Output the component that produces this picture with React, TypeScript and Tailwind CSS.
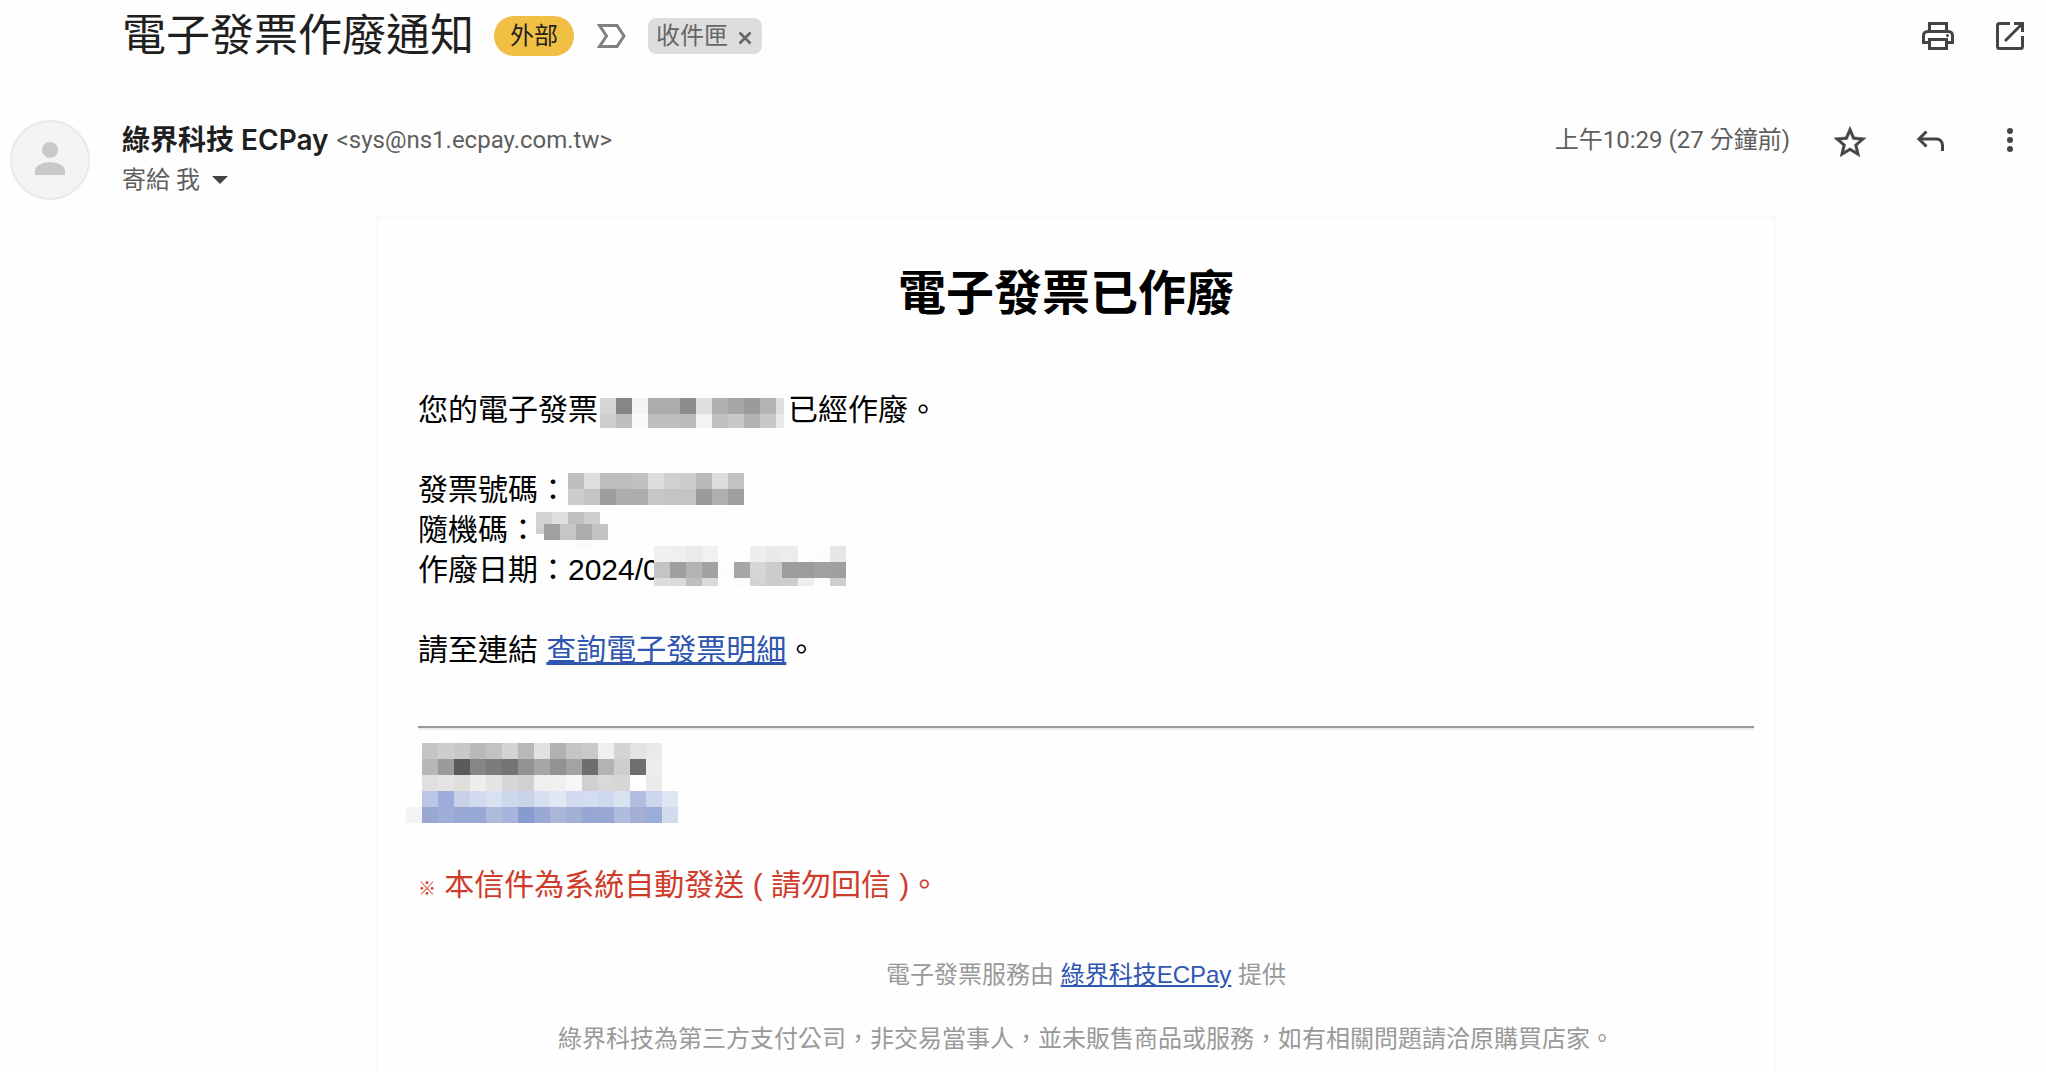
import React, { useState } from 'react';

interface MosaicRow {
  x: number;
  y: number;
  w?: number;
  h?: number;
  cells: string[];
}

interface MosaicProps {
  width: number;
  height: number;
  rows: MosaicRow[];
  className?: string;
}

const CELL = 16;

// Pixelated block that hides private data
const Mosaic = ({ width, height, rows, className = '' }: MosaicProps) => (
  <svg
    width={width}
    height={height}
    viewBox={`0 0 ${width} ${height}`}
    shapeRendering="crispEdges"
    aria-hidden="true"
    className={`shrink-0 overflow-visible ${className}`}
  >
    {rows.map((row) =>
      row.cells.map((fill, i) => (
        <rect
          key={`${row.x}-${row.y}-${i}`}
          x={row.x + i * CELL}
          y={row.y}
          width={row.w ?? CELL}
          height={row.h ?? CELL}
          fill={fill}
        />
      ))
    )}
  </svg>
);

const nameRows: MosaicRow[] = [
  { x: 0, y: 6, cells: ['#d6d6d6', '#868686', '#f4f4f4', '#acacac', '#acacac', '#8d8d8d', '#dfdfdf', '#b0b0b0', '#a6a6a6', '#9a9a9a', '#b3b3b3'] },
  { x: 176, y: 6, w: 8, cells: ['#dedede'] },
  { x: 0, y: 22, h: 14, cells: ['#cecece', '#bebebe', '#fafafa', '#bebebe', '#bebebe', '#bcbcbc', '#f3f3f3', '#c1c1c1', '#c7c7c7', '#b2b2b2', '#c8c8c8'] },
  { x: 176, y: 22, w: 8, h: 14, cells: ['#e8e8e8'] },
];

const numberRows: MosaicRow[] = [
  { x: 0, y: 0, cells: ['#bebebe', '#dedede', '#bdbdbd', '#bdbdbd', '#c1c1c1', '#dddddd', '#d0d0d0', '#cccccc', '#b9b9b9', '#dcdcdc', '#c2c2c2'] },
  { x: 0, y: 16, cells: ['#cdcdcd', '#c5c5c5', '#9d9d9d', '#adadad', '#adadad', '#c7c7c7', '#c4c4c4', '#c4c4c4', '#9b9b9b', '#afafaf', '#9e9e9e'] },
];

const randomRows: MosaicRow[] = [
  { x: 0, y: 0, cells: ['#d2d2d2', '#dedede', '#bfbfbf', '#cecece'] },
  { x: 0, y: 16, h: 6, cells: ['#cfcfcf'] },
  { x: 8, y: 12, cells: ['#a0a0a0', '#c6c6c6', '#acacac', '#c3c3c3'] },
  { x: 40, y: 28, h: 8, cells: ['#fafafa', '#fcfcfc'] },
];

const dateRows: MosaicRow[] = [
  { x: 0, y: 0, cells: ['#f0f0f0', '#efefef', '#eaeaea', '#f1f1f1', '#fefefe', '#fefefe', '#eeeeee', '#e9e9e9', '#ececec', '#fefefe', '#fcfcfc', '#e6e6e6'] },
  { x: 0, y: 16, cells: ['#c4c4c4', '#9f9f9f', '#b3b3b3', '#a2a2a2', '#fcfcfc', '#a6a6a6', '#d6d6d6', '#cccccc', '#9d9d9d', '#9c9c9c', '#a1a1a1', '#9f9f9f'] },
  { x: 0, y: 32, h: 8, cells: ['#dcdcdc', '#dadada', '#bebebe', '#dadada', '#fefefe', '#fbfbfb', '#d3d3d3', '#cccccc', '#cdcdcd', '#eeeeee', '#fcfcfc', '#cecece'] },
];

const storeRows: MosaicRow[] = [
  { x: 16, y: 0, cells: ['#c5c5c5', '#cdcdcd', '#c8c8c8', '#b9b9b9', '#c2c2c2', '#d4d4d4', '#b8b8b8', '#e2e2e2', '#b2b2b2', '#c5c5c5', '#c9c9c9', '#efefef', '#d4d4d4', '#e3e3e3', '#e9e9e9'] },
  { x: 16, y: 16, cells: ['#b7b7b7', '#9b9b9b', '#5b5b5b', '#868686', '#7c7c7c', '#747474', '#939393', '#a6a6a6', '#929292', '#a3a3a3', '#6e6e6e', '#b3b3b3', '#cecece', '#6f6f6f', '#ededed'] },
  { x: 16, y: 32, cells: ['#e0e0e0', '#e4e4e4', '#dededb', '#eeeeee', '#e3e5e4', '#d6d6d6', '#d0d0d0', '#efefef', '#f0f0f0', '#f4f7f6', '#d0d0d0', '#d9d9d9', '#d6d6d6', '#ffffff', '#ebebeb'] },
  { x: 16, y: 48, cells: ['#bbc5e5', '#9dacda', '#c6d1e9', '#d1daee', '#d8e1ef', '#cbd7eb', '#c8d2e8', '#d5dff0', '#e1e7f5', '#d1daee', '#d4dcf2', '#ced9f0', '#d9e2ef', '#b1bedf', '#cdd5ea', '#dfe6f3'] },
  { x: 0, y: 64, cells: ['#f2f4f8', '#99a8cf', '#9faed9', '#98a9d6', '#98a9d6', '#aebbdb', '#a7b5dc', '#879bcd', '#99a9d3', '#abb5da', '#a2b0d6', '#97a7d4', '#99a8d2', '#afbbdf', '#a2afd3', '#9aacd8', '#d2dcee'] },
];

const PrintIcon = () => (
  <svg viewBox="0 0 40 40" fill="none" stroke="currentColor" strokeWidth="3" className="h-10 w-10">
    <path d="M11.5 15.5v-8h17v8" />
    <path d="M11.5 26.5h-6v-7a4 4 0 0 1 4-4h21a4 4 0 0 1 4 4v7h-6" />
    <path d="M11.5 23.5h17v9h-17z" />
    <circle cx="29.5" cy="19.5" r="1.5" fill="currentColor" stroke="none" />
  </svg>
);

const NewWindowIcon = () => (
  <svg viewBox="0 0 40 40" fill="none" stroke="currentColor" strokeWidth="3" className="h-10 w-10">
    <path d="M20 7.5H9.5a2 2 0 0 0-2 2v21a2 2 0 0 0 2 2h21a2 2 0 0 0 2-2V20" />
    <path d="M24 7.5h8.5V16" />
    <path d="M15 25 32 8" />
  </svg>
);

const StarIcon = () => (
  <svg viewBox="-0.5 -2 25 25" fill="currentColor" stroke="currentColor" strokeWidth="0.3" className="h-10 w-10">
    <path d="M22 9.24l-7.19-.62L12 2 9.19 8.63 2 9.24l5.46 4.73L5.82 21 12 17.27 18.18 21l-1.63-7.03L22 9.24zM12 15.4l-3.76 2.27 1-4.28-3.32-2.88 4.38-.38L12 6.1l1.71 4.04 4.38.38-3.32 2.88 1 4.28L12 15.4z" />
  </svg>
);

const ReplyIcon = () => (
  <svg viewBox="0 0 40 40" fill="none" stroke="currentColor" strokeWidth="3" className="h-10 w-10">
    <path d="M16.5 11.5 9 19l7.5 7.5" />
    <path d="M9 19h17.5a6 6 0 0 1 6 6v6" />
  </svg>
);

const MoreIcon = () => (
  <svg viewBox="0 0 40 40" fill="currentColor" className="h-10 w-10">
    <circle cx="20" cy="11" r="3" />
    <circle cx="20" cy="20" r="3" />
    <circle cx="20" cy="29" r="3" />
  </svg>
);

const ImportanceIcon = () => (
  <svg viewBox="0 0 30 24" fill="none" stroke="currentColor" strokeWidth="3" className="h-6 w-[30px]">
    <path d="M3.5 1.5H21L28 12l-7 10.5H3.5L10.5 12z" />
  </svg>
);

const Avatar = () => (
  <svg viewBox="0 0 80 80" className="h-20 w-20 shrink-0" role="img" aria-label="綠界科技 ECPay">
    <circle cx="40" cy="40" r="39" fill="#f4f4f4" stroke="#e9e9e9" strokeWidth="2" />
    <circle cx="40" cy="30" r="8" fill="#c9c9c9" />
    <path d="M25 55v-4c0-6 9-9 15-9s15 3 15 9v4z" fill="#c9c9c9" />
  </svg>
);

export default function App() {
  const [starred, setStarred] = useState(false);
  const [inInbox, setInInbox] = useState(true);

  return (
    <div className="flex min-h-screen flex-col bg-[#fefefe] font-['Roboto','Noto_Sans_CJK_TC',sans-serif] text-[#1f1f1f]">
      {/* Subject */}
      <header className="flex h-[72px] items-center justify-between pr-4 pl-[122px]">
        <div className="flex items-center gap-5">
          <h1 className="text-[44px] leading-none whitespace-nowrap">電子發票作廢通知</h1>
          <span className="flex h-10 items-center rounded-full bg-[#f0bf43] px-4 text-2xl">外部</span>
          <button type="button" aria-label="重要性" className="mx-0.5 text-[#808080]">
            <ImportanceIcon />
          </button>
          {inInbox && (
            <span className="flex h-9 items-center gap-2 rounded-lg bg-[#dddddd] px-2 text-2xl text-[#666666]">
              收件匣
              <button type="button" aria-label="移除標籤" onClick={() => setInInbox(false)} className="mt-1">
                <svg viewBox="0 0 18 18" fill="none" stroke="currentColor" strokeWidth="2.6" className="h-[18px] w-[18px]">
                  <path d="M3.5 3.5l11 11M14.5 3.5l-11 11" />
                </svg>
              </button>
            </span>
          )}
        </div>
        <div className="flex gap-8 text-[#444444]">
          <button type="button" aria-label="全部列印">
            <PrintIcon />
          </button>
          <button type="button" aria-label="在新視窗中開啟">
            <NewWindowIcon />
          </button>
        </div>
      </header>

      {/* Sender */}
      <section className="mt-12 flex gap-8 pr-4 pl-2.5">
        <Avatar />
        <div className="flex-1">
          <div className="flex h-10 items-center justify-between">
            <p className="flex items-center gap-2 whitespace-nowrap">
              <span className="font-['Inter','Noto_Sans_CJK_TC',sans-serif] text-[28px] leading-10 font-semibold">
                綠界科技 ECPay
              </span>
              <span className="text-2xl text-[#5e5e5e]">&lt;sys@ns1.ecpay.com.tw&gt;</span>
            </p>
            <div className="flex items-center gap-10 text-[#444444]">
              <time className="text-2xl whitespace-nowrap text-[#5e5e5e]">上午10:29 (27 分鐘前)</time>
              <button type="button" aria-label="加星號" aria-pressed={starred} onClick={() => setStarred(!starred)}>
                <StarIcon />
              </button>
              <button type="button" aria-label="回覆">
                <ReplyIcon />
              </button>
              <button type="button" aria-label="更多">
                <MoreIcon />
              </button>
            </div>
          </div>
          <button type="button" className="flex h-10 items-center gap-3 text-2xl text-[#5e5e5e]">
            寄給 我
            <svg viewBox="0 0 16 8" fill="#444444" className="h-2 w-4">
              <path d="M0 0h16L8 8z" />
            </svg>
          </button>
        </div>
      </section>

      {/* Message */}
      <div className="mt-4 flex flex-1 flex-col pr-4 pl-[122px]">
        <main className="mx-auto w-full max-w-[1400px] flex-1 border-2 border-b-0 border-[#fafafa] pr-5 pl-10 font-['Liberation_Sans','Noto_Sans_CJK_TC',sans-serif] text-[30px] leading-10 text-black">
          <h2 className="mt-10 pr-10 text-center text-5xl leading-[72px] font-bold">電子發票已作廢</h2>

          <div className="mt-[60px]">
            <p className="flex h-10 items-center whitespace-nowrap">
              您的電子發票
              <Mosaic width={184} height={36} rows={nameRows} className="mr-1 ml-0.5" />
              已經作廢。
            </p>
          </div>
          <div className="mt-10 whitespace-nowrap">
            <p className="flex h-10 items-center">
              發票號碼：
              <Mosaic width={176} height={34} rows={numberRows} />
            </p>
            <p className="flex h-10 items-center">
              隨機碼：
              <Mosaic width={72} height={36} rows={randomRows} className="-ml-0.5" />
            </p>
            <p className="flex h-10 items-center">
              作廢日期：2024/0
              <Mosaic width={192} height={48} rows={dateRows} className="-ml-1.5" />
            </p>
          </div>
          <p className="mt-10">
            請至連結{' '}
            <a href="#invoice" className="text-[#2f56b0] underline">
              查詢電子發票明細
            </a>
            。
          </p>

          <hr className="mt-14 h-1 border-t-2 border-b-2 border-t-[#999999] border-b-[#eeeeee]" />
          <Mosaic width={272} height={80} rows={storeRows} className="mt-[13px] -ml-3" />

          <p className="mt-[42px] text-[#cf3b2b]">
            <span className="text-lg font-bold">※</span> 本信件為系統自動發送 ( 請勿回信 )。
          </p>

          <footer className="mt-[50px] text-center text-2xl text-[#999999]">
            <p className="leading-10">
              電子發票服務由{' '}
              <a href="#ecpay" className="text-[#2f56b0] underline">
                綠界科技ECPay
              </a>{' '}
              提供
            </p>
            <p className="mt-6 leading-10">
              綠界科技為第三方支付公司，非交易當事人，並未販售商品或服務，如有相關問題請洽原購買店家。
            </p>
          </footer>
        </main>
      </div>
    </div>
  );
}
